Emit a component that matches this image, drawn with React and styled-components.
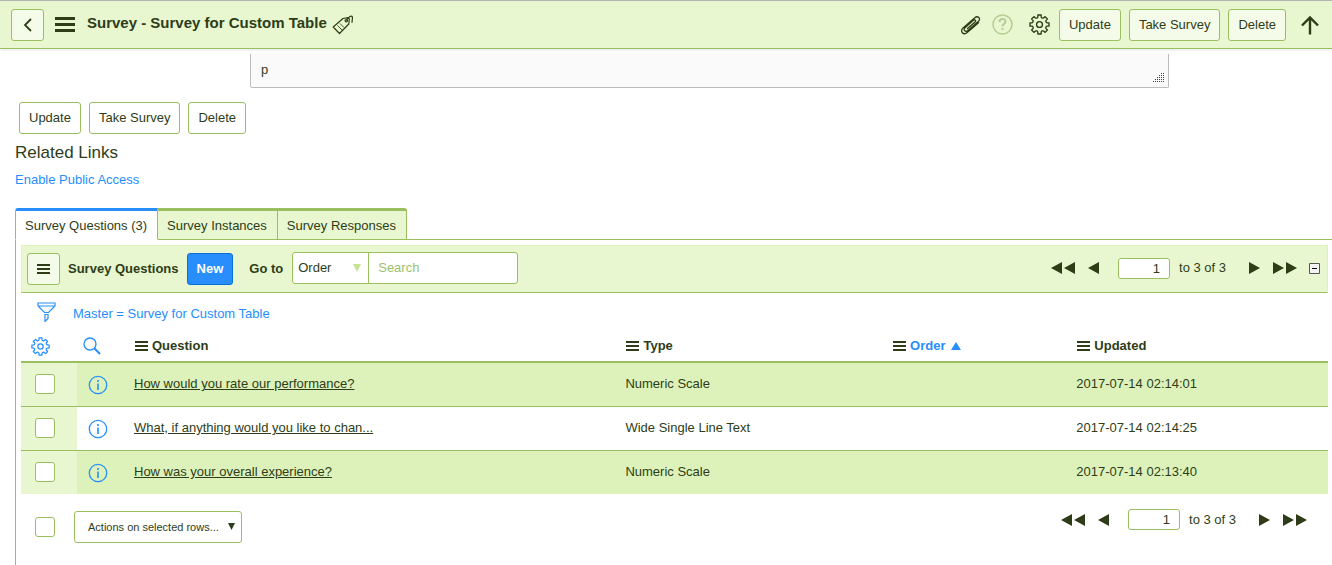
import React, { useState } from "react";
import styled, { createGlobalStyle } from "styled-components";

const ROWS = [
  {
    id: 1,
    question: "How would you rate our performance?",
    type: "Numeric Scale",
    updated: "2017-07-14 02:14:01",
  },
  {
    id: 2,
    question: "What, if anything would you like to chan...",
    type: "Wide Single Line Text",
    updated: "2017-07-14 02:14:25",
  },
  {
    id: 3,
    question: "How was your overall experience?",
    type: "Numeric Scale",
    updated: "2017-07-14 02:13:40",
  },
];

const TABS = ["Survey Questions (3)", "Survey Instances", "Survey Responses"];

const polar = (angle, r) => `${(10 + r * Math.sin(angle)).toFixed(2)} ${(10 - r * Math.cos(angle)).toFixed(2)}`;

// eight teeth around a 20x20 box, with a rounded valley between each pair
const gearPath = () => {
  let d = "";
  for (let i = 0; i < 8; i++) {
    const mid = (i * Math.PI) / 4;
    const valley = mid + Math.PI / 8;
    d += `${i ? "L" : "M"}${polar(mid - 0.17, 9.2)}L${polar(mid + 0.17, 9.2)}`;
    d += `L${polar(mid + 0.22, 7.4)}Q${polar(valley, 6)} ${polar(mid + Math.PI / 4 - 0.22, 7.4)}`;
  }
  return `${d}Z`;
};

const GEAR = gearPath();

function Gear({ size }) {
  return (
    <svg width={size} height={size} viewBox="0 0 20 20" fill="none" stroke="currentColor" strokeWidth="1.3" strokeLinejoin="round">
      <path d={GEAR} />
      <circle cx="10" cy="10" r="2.8" />
    </svg>
  );
}

function Bars({ big }) {
  if (big) {
    return (
      <svg width="20" height="15" viewBox="0 0 20 15" fill="currentColor">
        <path d="M0 0h20v3H0zM0 6h20v3H0zM0 12h20v3H0z" />
      </svg>
    );
  }
  return (
    <svg width="13" height="10" viewBox="0 0 13 10" fill="currentColor">
      <path d="M0 0h13v2H0zM0 4h13v2H0zM0 8h13v2H0z" />
    </svg>
  );
}

function Info() {
  return (
    <svg width="20" height="20" viewBox="0 0 20 20" fill="none" stroke="currentColor">
      <circle cx="10" cy="10" r="8.7" strokeWidth="1.3" />
      <path d="M10 8.5v6.5M10 5v2" strokeWidth="1.6" />
    </svg>
  );
}

function Pager({ id, children }) {
  const [page, setPage] = useState("1");
  return (
    <PagerBox>
      <IconButton aria-label="First page">
        <svg width="24" height="12" viewBox="0 0 24 12" fill="currentColor">
          <path d="M11 0v12L0 6zM24 0v12L13 6z" />
        </svg>
      </IconButton>
      <IconButton aria-label="Previous page">
        <svg width="11" height="12" viewBox="0 0 11 12" fill="currentColor">
          <path d="M11 0v12L0 6z" />
        </svg>
      </IconButton>
      <PageInput id={id} aria-label="Row number" value={page} onChange={(e) => setPage(e.target.value)} />
      <PageLabel htmlFor={id}>to 3 of 3</PageLabel>
      <IconButton aria-label="Next page">
        <svg width="11" height="12" viewBox="0 0 11 12" fill="currentColor">
          <path d="M0 0v12l11-6z" />
        </svg>
      </IconButton>
      <IconButton aria-label="Last page">
        <svg width="24" height="12" viewBox="0 0 24 12" fill="currentColor">
          <path d="M0 0v12l11-6zM13 0v12l11-6z" />
        </svg>
      </IconButton>
      {children}
    </PagerBox>
  );
}

function FormButtons() {
  return (
    <>
      <Button>Update</Button>
      <Button>Take Survey</Button>
      <Button>Delete</Button>
    </>
  );
}

function Header() {
  return (
    <HeaderBar>
      <SquareButton aria-label="Back">
        <svg width="10" height="14" viewBox="0 0 10 14" fill="none" stroke="currentColor" strokeWidth="1.8">
          <path d="M8 1L2 7l6 6" />
        </svg>
      </SquareButton>
      <HeaderMenu aria-label="Form menu">
        <Bars big />
      </HeaderMenu>
      <Title>Survey - Survey for Custom Table</Title>
      <IconButton aria-label="Tags">
        <svg width="22" height="20" viewBox="0 0 22 20" fill="none" stroke="currentColor" strokeWidth="1.2" strokeLinejoin="round">
          <path d="M1.2 12L11 3.5l5-.8 1.3 1.3-.5 5L7.500 18.500z" />
          <path d="M5.500 10.500l4.500 4.500M8 8.500l4 4" strokeWidth="0.9" />
          <circle cx="14.300" cy="5.700" r="1.200" />
          <path d="M14.300 5.500C16 2 19.500 0 20.300 1.800c.5 1.500-.3 3-.3 6" />
        </svg>
      </IconButton>
      <HeaderTools>
        <IconButton aria-label="Attachments">
          <svg width="22" height="20" viewBox="0 0 22 20" fill="none" stroke="currentColor" strokeWidth="1.3" strokeLinecap="round">
            <path d="M7.500 13.500L15 7c1.400-1.400-.2-3-1.600-1.700L5 12.800c-2.300 2.200.5 4.800 2.800 2.700L18.500 6.200c2.800-2.700-.8-6-3.700-3.500L3 13c-3.700 3.500.6 7.800 4.500 4.300l11-9.600" />
          </svg>
        </IconButton>
        <HelpButton aria-label="Help">
          <svg width="21" height="21" viewBox="0 0 21 21" fill="none" stroke="currentColor" strokeWidth="1.5">
            <circle cx="10.500" cy="10.500" r="9.500" />
            <path d="M7.500 8c0-4 6-4 6-.5 0 2.500-3 2.500-3 5M10.500 14v2" strokeWidth="2" />
          </svg>
        </HelpButton>
        <IconButton aria-label="Settings">
          <Gear size={21} />
        </IconButton>
        <ButtonGroup>
          <FormButtons />
        </ButtonGroup>
        <IconButton aria-label="Scroll to top">
          <svg width="20" height="20" viewBox="0 0 20 20" fill="none" stroke="currentColor" strokeWidth="2.400">
            <path d="M10 19.500V2.500M2 10.500l8-8 8 8" />
          </svg>
        </IconButton>
      </HeaderTools>
    </HeaderBar>
  );
}

function ListToolbar() {
  return (
    <Toolbar>
      <SquareButton aria-label="List menu">
        <Bars />
      </SquareButton>
      <ListTitle>Survey Questions</ListTitle>
      <NewButton>New</NewButton>
      <GoTo htmlFor="goto">Go to</GoTo>
      <SearchGroup>
        <SelectWrap>
          <GoToSelect id="goto" defaultValue="Order">
            <option>Order</option>
            <option>Question</option>
            <option>Type</option>
            <option>Updated</option>
          </GoToSelect>
          <SelectArrow $pale viewBox="0 0 8 8">
            <path d="M0 0h8L4 8z" />
          </SelectArrow>
        </SelectWrap>
        <SearchInput aria-label="Search" placeholder="Search" />
      </SearchGroup>
      <Pager id="page-top">
        <Collapse aria-label="Collapse list">
          <svg width="11" height="11" viewBox="0 0 11 11">
            <path d="M.5.5h10v10H.5z" fill="#f4f4f4" stroke="#555" />
            <path d="M3 5h5v1H3z" fill="#000" />
          </svg>
        </Collapse>
      </Pager>
    </Toolbar>
  );
}

function QuestionTable() {
  return (
    <Table>
      <colgroup>
        <col style={{ width: 56 }} />
        <col style={{ width: 48 }} />
        <col style={{ width: "37.6%" }} />
        <col style={{ width: "20.4%" }} />
        <col style={{ width: "14.1%" }} />
        <col />
      </colgroup>
      <thead>
        <tr>
          <IconHeadCell>
            <BlueIcon aria-label="Personalize list">
              <Gear size={19} />
            </BlueIcon>
          </IconHeadCell>
          <IconHeadCell $narrow>
            <BlueIcon aria-label="Search columns">
              <svg width="18" height="18" viewBox="0 0 18 18" fill="none" stroke="currentColor" strokeWidth="1.300">
                <circle cx="7" cy="7" r="6" />
                <path d="M11.500 11.500l5.500 5.500" strokeWidth="2" />
              </svg>
            </BlueIcon>
          </IconHeadCell>
          {["Question", "Type", "Order", "Updated"].map((name) => (
            <HeadCell key={name}>
              <HeadLabel>
                <Bars />
                {name === "Order" ? <Sorted href="#order">Order</Sorted> : name}
                {name === "Order" && (
                  <svg width="10" height="8" viewBox="0 0 10 8" fill="#278efc">
                    <path d="M5 0l5 8H0z" />
                  </svg>
                )}
              </HeadLabel>
            </HeadCell>
          ))}
        </tr>
      </thead>
      <tbody>
        {ROWS.map((row) => (
          <Row key={row.id}>
            <CheckCell>
              <Checkbox type="checkbox" aria-label={`Select ${row.question}`} />
            </CheckCell>
            <InfoCell>
              <BlueIcon aria-label="Preview record">
                <Info />
              </BlueIcon>
            </InfoCell>
            <Cell>
              <QuestionLink href="#question">{row.question}</QuestionLink>
            </Cell>
            <Cell>{row.type}</Cell>
            <Cell />
            <Cell>{row.updated}</Cell>
          </Row>
        ))}
      </tbody>
    </Table>
  );
}

function App() {
  const [tab, setTab] = useState(0);

  return (
    <Page>
      <GlobalStyle />
      <Header />
      <FieldWrap>
        <Field aria-label="Description" defaultValue="p" />
        <Grip width="11" height="9" viewBox="0 0 11 9">
          {[0, 1, 2, 3, 4].map((r) => (
            <path key={r} d={`M${8 - r * 2} ${r * 2 + 0.5}H11`} stroke="#5a3a3a" strokeDasharray="1 1" />
          ))}
        </Grip>
      </FieldWrap>
      <FormActions>
        <FormButtons />
      </FormActions>
      <Related>
        <h2>Related Links</h2>
        <a href="#public">Enable Public Access</a>
      </Related>
      <Tabs role="tablist">
        {TABS.map((name, index) => (
          <Tab key={name} role="tab" aria-selected={tab === index} $active={tab === index} onClick={() => setTab(index)}>
            {name}
          </Tab>
        ))}
        <TabLine />
      </Tabs>
      <Panel>
        <ListToolbar />
        <Filter>
          <BlueIcon aria-label="Show filter">
            <svg width="20" height="20" viewBox="0 0 20 20" fill="none" stroke="currentColor" strokeWidth="1.200">
              <path d="M1 1h17v3H1zM1.500 4.500L7.500 10.500h4l6-6M8 12.500h3v4l-3 3z" />
            </svg>
          </BlueIcon>
          <FilterLink href="#filter">Master = Survey for Custom Table</FilterLink>
        </Filter>
        <QuestionTable />
        <Footer>
          <BulkActions>
            <Checkbox type="checkbox" aria-label="Select all rows" />
            <SelectWrap>
              <ActionSelect aria-label="Actions on selected rows">
                <option>Actions on selected rows...</option>
                <option>Delete</option>
              </ActionSelect>
              <SelectArrow viewBox="0 0 8 8">
                <path d="M0 0h8L4 8z" />
              </SelectArrow>
            </SelectWrap>
          </BulkActions>
          <Pager id="page-bottom" />
        </Footer>
      </Panel>
    </Page>
  );
}

const GlobalStyle = createGlobalStyle`
  * {
    box-sizing: border-box;
  }
  body {
    margin: 0;
    background: #fff;
    color: #2e3d18;
    font-family: "Liberation Sans", Arial, sans-serif;
    font-size: 13px;
    line-height: 16px;
  }
  button, input, select, textarea {
    font: inherit;
    color: inherit;
  }
  a {
    color: #278efc;
    text-decoration: none;
  }
  svg {
    display: block;
    flex: none;
  }
`;

const Page = styled.div`
  display: flex;
  flex-direction: column;
  min-height: 100vh;
`;

const HeaderBar = styled.header`
  display: flex;
  align-items: center;
  height: 49px;
  padding: 0 12px 0 11px;
  background: #e8f7d0;
  border-top: 1px solid #b4b4b4;
  border-bottom: 1px solid #9abf5f;
  box-shadow: 0 1px 3px rgba(0, 0, 0, 0.1);
`;

const Button = styled.button`
  height: 32px;
  padding: 0 9px;
  background: rgba(255, 255, 255, 0.5);
  border: 1px solid #9abf5f;
  border-radius: 3px;
  cursor: pointer;
`;

const SquareButton = styled(Button)`
  display: flex;
  align-items: center;
  justify-content: center;
  width: 33px;
  padding: 0;
`;

const NewButton = styled(Button)`
  margin-left: 8px;
  background: #278efc;
  border-color: #0b6fdb;
  color: #fff;
  font-weight: bold;
`;

const IconButton = styled.button`
  display: flex;
  padding: 0;
  background: none;
  border: 0;
  cursor: pointer;
`;

const BlueIcon = styled(IconButton)`
  color: #278efc;
`;

const HeaderMenu = styled(IconButton)`
  margin: 0 12px 0 11px;
`;

const Title = styled.h1`
  margin: 0 5px 4px 0;
  font-size: 15px;
  line-height: 20px;
`;

const HeaderTools = styled.div`
  display: flex;
  align-items: center;
  margin-left: auto;
`;

const HelpButton = styled(IconButton)`
  margin: 0 16px 0 10px;
  color: #b5cd93;
`;

const ButtonGroup = styled.div`
  display: flex;
  gap: 8px;
  margin: 0 14px 0 9px;
`;

const FieldWrap = styled.div`
  position: relative;
  margin: 5px 163px 0 250px;
`;

const Field = styled.textarea`
  display: block;
  width: 100%;
  height: 34px;
  padding: 8px 10px;
  background: #fafafa;
  border: 1px solid #bbbdbf;
  border-top: 0;
  border-radius: 0 0 2px 2px;
  resize: none;
`;

const Grip = styled.svg`
  position: absolute;
  right: 5px;
  bottom: 6px;
`;

const FormActions = styled.div`
  display: flex;
  gap: 8px;
  padding: 14px 19px 0;
`;

const Related = styled.section`
  padding: 8px 15px 20px;

  h2 {
    margin: 0 0 9px;
    font-size: 17px;
    font-weight: normal;
    line-height: 21px;
  }
`;

const Tabs = styled.div`
  display: flex;
  height: 32px;
  margin-left: 15px;
`;

const Tab = styled.button`
  padding: 2px 10px 0 9px;
  background: ${(props) => (props.$active ? "#fff" : "#e8f7d0")};
  border: solid #9abf5f;
  border-width: 3px 1px 1px 0;
  cursor: pointer;

  ${(props) =>
    props.$active &&
    `
    border-top-color: #278efc;
    border-bottom-color: #fff;
  `}

  &:first-child {
    border-left-width: 1px;
    border-top-left-radius: 3px;
  }
  &:nth-child(3) {
    border-top-right-radius: 3px;
  }
`;

const TabLine = styled.div`
  flex: 1;
  border-bottom: 1px solid #9abf5f;
`;

const Panel = styled.main`
  flex: 1;
  margin-left: 15px;
  padding: 5px 4px 20px 5px;
  border-left: 1px solid #9abf5f;
`;

const PagerBox = styled.div`
  display: flex;
  align-items: center;
  gap: 13px;
  margin-left: auto;
`;

const SearchGroup = styled.div`
  display: flex;
  height: 32px;
  background: #fff;
  border: 1px solid #9abf5f;
  border-radius: 3px;
`;

const Toolbar = styled.div`
  display: flex;
  align-items: center;
  height: 48px;
  padding: 0 7px 0 5px;
  background: #e8f7d0;
  border: 1px solid #ddf1bb;
  border-bottom-color: #9abf5f;

  ${SearchGroup}, ${PagerBox} {
    margin-bottom: 2px;
  }
`;

const ListTitle = styled.h2`
  margin: 0 0 0 8px;
  font-size: 13px;
`;

const GoTo = styled.label`
  margin: 0 9px 0 16px;
  font-weight: bold;
`;

const SelectWrap = styled.div`
  position: relative;
  display: flex;
`;

const GoToSelect = styled.select`
  width: 75px;
  padding: 0 5px;
  appearance: none;
  background: none;
  border: 0;
`;

const SelectArrow = styled.svg`
  position: absolute;
  top: 50%;
  right: 7px;
  width: ${(props) => (props.$pale ? "8px" : "7px")};
  height: ${(props) => (props.$pale ? "8px" : "7px")};
  margin-top: -4px;
  fill: ${(props) => (props.$pale ? "#c5e295" : "#2e3d18")};
  pointer-events: none;
`;

const SearchInput = styled.input`
  width: 149px;
  padding: 0 9px;
  background: none;
  border: 0;
  border-left: 1px solid #9abf5f;

  &::placeholder {
    color: #9dbf6c;
    opacity: 1;
  }
`;

const PageInput = styled.input`
  width: 52px;
  height: 21px;
  margin-left: 6px;
  padding: 0 9px;
  background: #fff;
  border: 1px solid #9abf5f;
  border-radius: 3px;
  text-align: right;
`;

const PageLabel = styled.label`
  margin: 0 10px 0 -4px;
`;

const Collapse = styled(IconButton)`
  margin-left: -1px;
`;

const Filter = styled.div`
  display: flex;
  align-items: center;
  gap: 16px;
  height: 38px;
  padding-left: 16px;
`;

const FilterLink = styled.a`
  padding-top: 4px;
`;

const Table = styled.table`
  width: 100%;
  table-layout: fixed;
  border-collapse: collapse;
`;

const HeadCell = styled.th`
  height: 31px;
  padding: 0 10px;
  border-bottom: 2px solid #9abf5f;
  text-align: left;
`;

const IconHeadCell = styled(HeadCell)`
  padding: 0 0 0 ${(props) => (props.$narrow ? "6px" : "10px")};
`;

const HeadLabel = styled.div`
  display: flex;
  align-items: center;
  gap: 4px;
`;

const Sorted = styled.a`
  margin-right: 2px;
`;

const Row = styled.tr`
  height: 44px;

  &:nth-child(odd) {
    background: #ddf2bb;
  }
  &:not(:last-child) {
    border-bottom: 1px solid #9abf5f;
  }
`;

const Cell = styled.td`
  padding: 0 9px;
`;

const CheckCell = styled.td`
  padding: 0 0 0 14px;
  background: #e8f7d0;
`;

const InfoCell = styled.td`
  padding: 2px 0 0 11px;
`;

const Checkbox = styled.input`
  display: block;
  width: 20px;
  height: 20px;
  margin: 0;
  appearance: none;
  background: #fff;
  border: 1px solid #9abf5f;
  border-radius: 3px;

  &:checked {
    background: #278efc;
  }
`;

const QuestionLink = styled.a`
  color: inherit;
  text-decoration: underline;
`;

const Footer = styled.div`
  display: flex;
  align-items: flex-start;
  padding: 15px 21px 0 14px;
`;

const BulkActions = styled.div`
  display: flex;
  align-items: center;
  gap: 19px;
  padding-top: 2px;
`;

const ActionSelect = styled.select`
  width: 168px;
  height: 32px;
  padding: 0 13px;
  appearance: none;
  background: #fff;
  border: 1px solid #9abf5f;
  border-radius: 3px;
  font-size: 11px;
`;

export default App;
